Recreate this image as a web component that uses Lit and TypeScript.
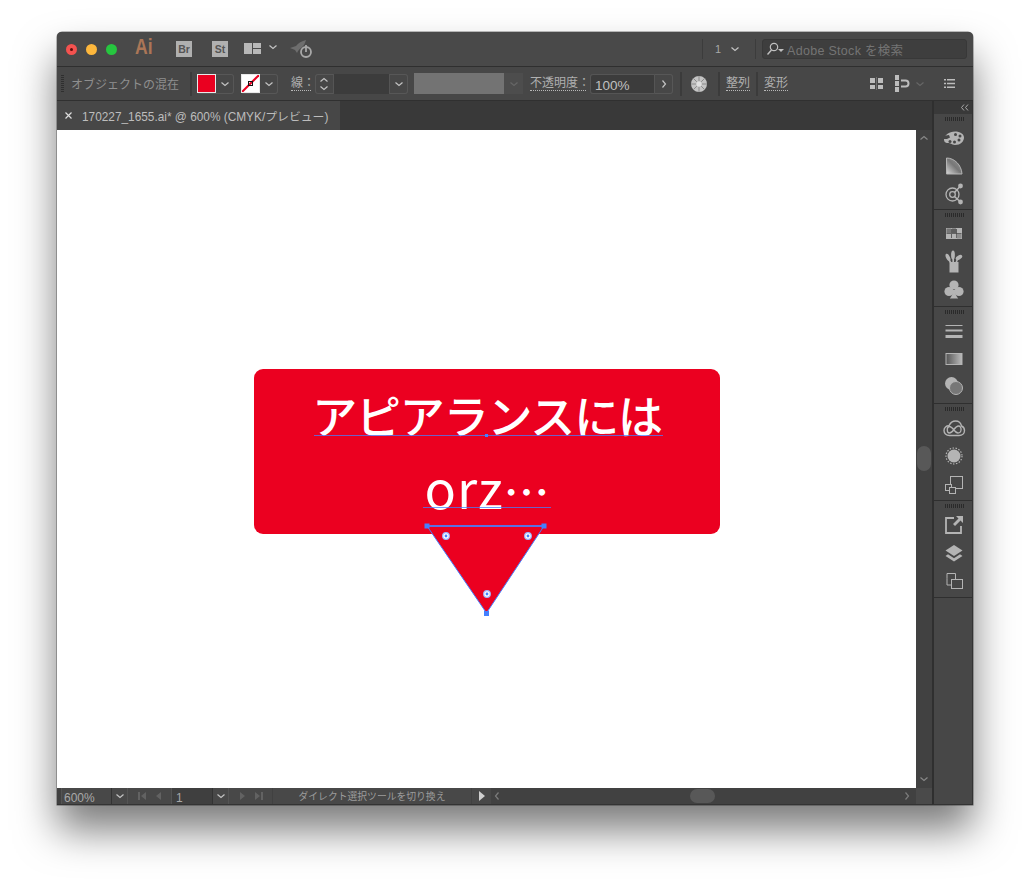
import { LitElement, css, html, svg } from 'lit';
import { customElement } from 'lit/decorators.js';

const chevron = (dir = 'down', color = '#c4c4c4') => {
  const pts: Record<string, string> = {
    down: '1.5,3.5 5,6.5 8.5,3.5',
    up: '1.5,6.5 5,3.5 8.5,6.5',
    right: '3.5,1.5 6.5,5 3.5,8.5',
    left: '6.5,1.5 3.5,5 6.5,8.5',
  };
  return html`<svg class="chev" width="10" height="10" viewBox="0 0 10 10">
    <polyline points=${pts[dir]} fill="none" stroke=${color} stroke-width="1.2" />
  </svg>`;
};

const G = '#b4b4b4';

const dockIcons = [
  [
    svg`<path fill=${G} d="M2 13.500C2 9.500 7 5.500 13 5.500c5 0 9 2.500 9 6 0 4-3.500 7.500-9 7.500-2 0-3-1-4.500-1.500S2 18 2 13.500z"/>
      <path fill="#474747" d="M1 10l6-1 1 2.500-3 1.500-4 0z"/><circle cx="8" cy="15.500" r="1.500" fill="#474747"/><circle cx="12.500" cy="16" r="1.500" fill="#474747"/><circle cx="17" cy="14" r="1.500" fill="#474747"/><circle cx="18" cy="10" r="1.500" fill="#474747"/><circle cx="13.500" cy="8.500" r="1.500" fill="#474747"/>`,
    svg`<defs><linearGradient id="gd" x1="0" y1="1" x2="1" y2="0"><stop offset="0" stop-color="#d8d8d8"/><stop offset=".5" stop-color="#777"/><stop offset="1" stop-color="#999"/></linearGradient></defs>
      <path fill="url(#gd)" stroke=${G} stroke-width="1" d="M4.500 4c8 0 15 7 15.500 16H4.500z"/>`,
    svg`<circle cx="10.500" cy="12.500" r="6.500" fill="none" stroke=${G} stroke-width="1.300"/><circle cx="10.500" cy="12.500" r="2.800" fill="none" stroke=${G} stroke-width="1.300"/><path stroke=${G} stroke-width="1.500" d="M12.500 10.500l6-6.500M12.500 14.500l6 5.500"/><circle cx="18.500" cy="4" r="2.400" fill=${G}/><circle cx="18.500" cy="20" r="2.400" fill=${G}/>`,
  ],
  [
    svg`<rect x="4" y="6" width="16" height="11" fill=${G}/><path fill="#4a4a4a" d="M9 7h.8v4H9zM14 7h.8v9H14zM4.500 11h15v.8h-15zM9 12h.8v4H9z"/><rect x="9.800" y="6.500" width="4.200" height="4.500" fill="#5e5e5e"/><rect x="4.500" y="6.500" width="4.500" height="4.500" fill="#777"/><rect x="14.800" y="12" width="4.700" height="4.500" fill="#8e8e8e"/>`,
    svg`<rect x="7.500" y="12" width="9" height="10.500" fill=${G}/>
      <ellipse cx="6" cy="7.500" rx="1.900" ry="4" transform="rotate(-25 6 7.500)" fill=${G}/><path stroke=${G} stroke-width="1.600" d="M7 10l2 3"/>
      <ellipse cx="11" cy="5" rx="1.900" ry="4.500" fill=${G}/><path stroke=${G} stroke-width="1.600" d="M11.200 9v4"/>
      <ellipse cx="17" cy="7.500" rx="3.600" ry="2" transform="rotate(-30 17 7.500)" fill=${G}/><path stroke=${G} stroke-width="1.600" d="M15.500 9l-1.500 4"/>`,
    svg`<circle cx="12" cy="7" r="4.600" fill=${G}/><circle cx="7" cy="13.500" r="4.600" fill=${G}/><circle cx="17" cy="13.500" r="4.600" fill=${G}/><path fill=${G} d="M10.800 12h2.400c0 4 1 6 3 8.500H7.800c2-2.500 3-4.500 3-8.500z"/>`,
  ],
  [
    svg`<path fill=${G} d="M3.500 6h17v1h-17zM3.500 10.500h17v2h-17zM3.500 16h17v3h-17z"/>`,
    svg`<defs><linearGradient id="gg"><stop offset="0" stop-color="#555"/><stop offset="1" stop-color="#bbb"/></linearGradient></defs><rect x="4" y="6.500" width="16" height="11" fill="url(#gg)" stroke=${G}/>`,
    svg`<circle cx="9.500" cy="8.500" r="6.500" fill=${G}/><circle cx="14" cy="13" r="6.500" fill="#777" stroke=${G} stroke-width="1"/>`,
  ],
  [
    svg`<path fill="none" stroke=${G} stroke-width="1.400" d="M7.500 19.500c-3.500 0-5.500-2.500-5.500-5 0-3 2.500-5 5-4.800C8.500 6.500 11 5 13.500 5c3.500 0 5.500 2.500 6 5 2 .8 3 2.500 3 4.500 0 2.500-2 5-5.500 5z"/><path fill="none" stroke=${G} stroke-width="1.300" d="M7.500 10.500c3.500 0 5 6.500 8.500 6.500 4 0 4-7 .5-7-4 0-5 7-9 7-3 0-3-6.500 0-6.500z"/>`,
    svg`<circle cx="12" cy="12" r="6.500" fill=${G}/><circle cx="12" cy="12" r="8" fill="none" stroke=${G} stroke-width="1.200" stroke-dasharray="1.500 1.500"/>`,
    svg`<rect x="8.500" y="4.500" width="12" height="12" fill="none" stroke=${G} stroke-width="1"/><rect x="3.500" y="12.500" width="6" height="6" fill="#474747" stroke=${G} stroke-width="1"/><rect x="7.500" y="15.500" width="6" height="6" fill="#474747" stroke=${G} stroke-width="1"/>`,
  ],
  [
    svg`<path fill="none" stroke=${G} stroke-width="1.800" d="M12 5H4v15h15v-7"/><path fill=${G} d="M14 3h7v7l-2.500-2.500-5.500 5.500-2-2 5.500-5.500z"/>`,
    svg`<path fill=${G} d="M12 4l8.500 5.500-8.500 5.500-8.500-5.500z"/><path fill=${G} d="M6 13.300l6 3.900 6-3.900 2.500 1.700-8.500 5.500L3.500 15z"/>`,
    svg`<path fill="none" stroke=${G} stroke-width="1" d="M5 9.500V4.500h8.500v6M5 9.500v6.500h4.500"/><rect x="9.500" y="10.500" width="11" height="9" fill="none" stroke=${G}/>`,
  ],
];

@customElement('app-root')
export class AppRoot extends LitElement {
  static styles = css`
    :host {
      display: block;
      height: 885px;
      overflow: hidden;
      background: #fff;
      padding: 32px 0 0 57px;
      box-sizing: border-box;
      font-family: 'Liberation Sans', 'Noto Sans CJK JP', sans-serif;
    }
    .window {
      width: 916px;
      height: 773px;
      display: flex;
      flex-direction: column;
      background: #474747;
      border-radius: 5px 5px 0 0;
      box-shadow: 0 25px 40px 0 rgba(0, 0, 0, 0.52), 0 0 0 0.5px rgba(0, 0, 0, 0.5);
    }
    .chev { display: block; flex: none; }

    .titlebar {
      height: 34px;
      flex: none;
      display: flex;
      align-items: center;
      background: #494949;
      border-bottom: 1px solid #2f2f2f;
      border-radius: 5px 5px 0 0;
    }
    .light { width: 11px; height: 11px; border-radius: 50%; margin-right: 9px; flex: none; }
    .light.close { margin-left: 9px; background: #f4524f; position: relative; }
    .light.close::after {
      content: '';
      position: absolute;
      left: 4px;
      top: 4px;
      width: 3px;
      height: 3px;
      border-radius: 50%;
      background: #5c0d0b;
    }
    .light.min { background: #fdb73c; }
    .light.max { background: #26c63f; margin-right: 0; }
    .ai {
      margin-left: 18px;
      margin-top: -5px;
      width: 20px;
      color: #ab7657;
      font: bold 22px/1 'Liberation Sans', sans-serif;
      transform: scaleX(0.8);
      transform-origin: left;
    }
    .brapp {
      width: 16px;
      height: 16px;
      background: #b0b0b0;
      color: #555;
      font: bold 10.5px/16px 'Liberation Sans', sans-serif;
      text-align: center;
      flex: none;
      margin-top: -1px;
    }
    .br { margin-left: 21px; }
    .st { margin-left: 20px; }
    .workspace { margin-left: 16px; margin-top: -2px; }
    .workspace-chev { margin-left: 7px; margin-top: -5px; }
    .rocket { margin-left: 12px; }
    .right-tools { margin-left: auto; display: flex; align-items: center; }
    .tsep { width: 1px; height: 20px; background: #3c3c3c; flex: none; }
    .page-num { color: #a8a8a8; font-size: 11px; margin-left: 12px; width: 14px; }
    .page-chev { margin-left: 1px; margin-right: 15px; }
    .search {
      margin-left: 6px;
      margin-right: 6px;
      width: 205px;
      height: 20px;
      box-sizing: border-box;
      display: flex;
      align-items: center;
      gap: 1px;
      padding-left: 3px;
      background: #3e3e3e;
      border: 1px solid #383838;
      border-radius: 3px;
      color: #747474;
      font-size: 12.5px;
      letter-spacing: 0.3px;
    }

    .toolbar {
      height: 33px;
      flex: none;
      display: flex;
      align-items: center;
      background: #474747;
      border-bottom: 1px solid #303030;
      color: #b0b0b0;
      font-size: 12px;
      white-space: nowrap;
    }
    .grip {
      margin-left: 4px;
      width: 3px;
      height: 18px;
      flex: none;
      background: repeating-linear-gradient(#2f2f2f 0 1px, transparent 1px 2px);
    }
    .mixed { margin-left: 7px; width: 107px; color: #8f8f8f; }
    .sep { width: 2px; height: 24px; background: #3b3b3b; flex: none; }
    .m12 { margin-left: 12px; }
    .m7 { margin-left: 7px; }
    .m11 { margin-left: 11px; }
    .m6 { margin-left: 6px; }
    .m5 { margin-left: 5px; }
    .ctl {
      height: 20px;
      display: flex;
      align-items: stretch;
      flex: none;
      border-radius: 3px;
      box-shadow: inset 0 0 0 1px #575757;
      background: #474747;
    }
    .swatch { width: 19px; height: 19px; box-sizing: border-box; flex: none; border: 1px solid #e8e8e8; }
    .swatch.fill { background: #ea0020; }
    .swatch.none { background: #fff; }
    .swatch svg { display: block; }
    .drop { width: 18px; display: flex; align-items: center; justify-content: center; flex: none; }
    .dotted { border-bottom: 1px dotted #b8b8b8; line-height: 13px; height: 13px; flex: none; }
    .stroke-label { margin-left: 13px; width: 20px; }
    .spin { width: 18px; display: flex; flex-direction: column; align-items: center; justify-content: center; flex: none; }
    .spin .chev { margin: -1px 0; }
    .input { background: #3c3c3c; border-left: 1px solid #555; border-right: 1px solid #555; }
    .stroke-input { width: 57px; box-sizing: border-box; }
    .stroke-ctl { margin-left: 4px; }
    .gray { margin-left: 6px; width: 90px; height: 21px; background: #737373; flex: none; }
    .gray-drop { width: 19px; height: 21px; display: flex; align-items: center; justify-content: center; background: #4d4d4d; flex: none; }
    .opacity-label { margin-left: 7px; width: 56px; }
    .opacity { margin-left: 4px; }
    .opacity-value {
      width: 65px;
      box-sizing: border-box;
      border: 1px solid #555;
      border-radius: 3px 0 0 3px;
      background: #3c3c3c;
      color: #c0c0c0;
      font-size: 13.5px;
      line-height: 22px;
      padding-left: 4px;
    }
    .globe { margin-left: 9px; flex: none; display: block; }
    .word { width: 24px; }
    .tool-a { margin-left: auto; }
    .tool-b { margin-left: 12px; }
    .tool-c { margin-left: 5px; }
    .tool-d { margin-left: 19px; margin-right: 18px; }

    .tabbar {
      height: 29px;
      flex: none;
      display: flex;
      background: #393939;
    }
    .tab {
      width: 283px;
      display: flex;
      align-items: center;
      background: #474747;
      color: #bdbdbd;
      font-size: 11.85px;
      white-space: nowrap;
    }
    .tab-close { width: 7px; margin-left: 8px; margin-right: 10px; flex: none; display: block; }

    .body { flex: 1; display: flex; min-height: 0; }
    .main { width: 875px; flex: none; display: flex; flex-direction: column; }
    .view { flex: 1; display: flex; min-height: 0; }
    .canvas { width: 859px; flex: none; background: #fff; position: relative; overflow: hidden; }
    .vscroll {
      width: 16px;
      flex: none;
      background: #414141;
      display: flex;
      flex-direction: column;
      align-items: center;
      justify-content: space-between;
      padding: 3px 0 4px;
      box-sizing: border-box;
      position: relative;
    }
    .vthumb { position: absolute; top: 316px; left: 1px; width: 14px; height: 25px; border-radius: 7px; background: #585858; }

    .art {
      position: absolute;
      left: 197px;
      top: 239px;
      width: 466px;
      height: 165px;
      background: #eb0020;
      border-radius: 9px;
      color: #fff;
      font-family: 'Noto Sans CJK JP', sans-serif;
      font-weight: 500;
      font-size: 45px;
      letter-spacing: -1.2px;
      line-height: 72px;
      text-align: center;
      padding-top: 10px;
      box-sizing: border-box;
    }
    .line { display: block; height: 72px; white-space: nowrap; }
    .latin { font-size: 52px; font-weight: 400; letter-spacing: 1px; }
    .dots { font-size: 46px; letter-spacing: 0; }
    .marks { position: absolute; left: 0; top: 0; display: block; }

    .status {
      height: 17px;
      flex: none;
      display: flex;
      align-items: stretch;
      background: #414141;
      color: #a8a8a8;
      font-size: 12px;
      border-bottom: 1px solid #333;
      box-sizing: border-box;
      white-space: nowrap;
    }
    .sfield { background: #484848; box-sizing: border-box; border-left: 1px solid #545454; line-height: 20px; overflow: hidden; flex: none; }
    .zoom { width: 50px; margin-left: 4px; padding-left: 2px; }
    .pagef { width: 41px; padding-left: 4px; background: #3f3f3f; }
    .sdrop { width: 17px; background: #484848; border-left: 1px solid #333; border-right: 1px solid #545454; box-sizing: border-box; display: flex; align-items: center; justify-content: center; flex: none; }
    .nav { width: 43px; display: flex; align-items: center; justify-content: center; gap: 6px; flex: none; background: #484848; }
    .nav svg { display: block; }
    .msg {
      width: 198px;
      flex: none;
      background: #484848;
      margin-left: 1px;
      text-align: center;
      font-size: 9.8px;
      line-height: 18px;
      color: #9c9c9c;
    }
    .playbtn { width: 19px; flex: none; display: flex; align-items: center; justify-content: center; background: #484848; margin-left: 1px; }
    .hscroll { flex: 1; position: relative; display: flex; align-items: center; justify-content: space-between; padding: 0 4px 0 1px; }
    .hthumb { position: absolute; left: 199px; top: 1px; width: 25px; height: 14px; border-radius: 7px; background: #585858; }
    .corner { width: 16px; flex: none; background: #4a4a4a; }

    .dock {
      width: 41px;
      flex: none;
      background: #474747;
      border-left: 2px solid #2f2f2f;
      border-right: 1px solid #333;
      border-bottom: 1px solid #333;
      box-sizing: border-box;
      display: flex;
      flex-direction: column;
      margin-top: -29px;
    }
    .dock-head { height: 13px; flex: none; background: #393939; display: flex; justify-content: flex-end; align-items: center; padding-right: 3px; }
    .dock-arrows { display: block; }
    .group {
      height: 97px;
      box-sizing: border-box;
      flex: none;
      border-bottom: 1.5px solid #2f2f2f;
      display: flex;
      flex-direction: column;
      align-items: center;
      padding: 3px 0 0 2px;
    }
    .group.first { height: 96px; }
    .dock-grip {
      width: 19px;
      height: 4px;
      flex: none;
      margin-bottom: 5px;
      background: repeating-linear-gradient(90deg, #2a2a2a 0 1px, transparent 1px 2px);
    }
    .dock-icon { width: 24px; height: 24px; margin-bottom: 4px; display: block; flex: none; }
  `;

  private _drop() {
    return html`<span class="drop">${chevron()}</span>`;
  }

  private _navIcon(kind: string) {
    const paths: Record<string, string> = {
      first: 'M1 1h2v8H1zM9 1v8L4 5z',
      prev: 'M8 1v8L3 5z',
      next: 'M2 1v8l5-4z',
      last: 'M1 1v8l5-4zM7 1h2v8H7z',
    };
    return html`<svg width="10" height="10" viewBox="0 0 10 10"><path d=${paths[kind]} fill="#626262" /></svg>`;
  }

  private _titlebar() {
    return html`<div class="titlebar">
      <span class="light close"></span><span class="light min"></span><span class="light max"></span>
      <span class="ai">Ai</span>
      <span class="brapp br">Br</span>
      <span class="brapp st">St</span>
      <svg class="workspace" width="17" height="11" viewBox="0 0 17 11">
        <path fill="#b8b8b8" d="M0 0h8v11H0zM9 0h8v5H9zM9 6h8v5H9z" />
      </svg>
      <span class="workspace-chev">${chevron()}</span>
      <svg class="rocket" width="23" height="18" viewBox="0 0 23 18">
        <path fill="#6e6e6e" d="M0 8l6-2c2-3 6-5 10-6-1 3-2 6-5 8-2 1-3 3-4 5L5 10z" />
        <circle cx="16" cy="12" r="5" fill="none" stroke="#a8a8a8" stroke-width="1.8" />
        <path stroke="#a8a8a8" stroke-width="1.8" d="M16 5v7" />
      </svg>
      <div class="right-tools">
        <span class="tsep"></span>
        <span class="page-num">1</span>
        <span class="page-chev">${chevron()}</span>
        <span class="tsep"></span>
        <div class="search">
          <svg width="20" height="14" viewBox="0 0 20 14">
            <circle cx="8" cy="5" r="3.7" fill="none" stroke="#c0c0c0" stroke-width="1.2" />
            <path stroke="#c0c0c0" stroke-width="1.4" d="M5.500 8L1.500 12.500" />
            <path fill="#c0c0c0" d="M12 7h6l-3 3z" />
          </svg>
          <span>Adobe Stock を検索</span>
        </div>
      </div>
    </div>`;
  }

  private _toolbar() {
    return html`<div class="toolbar">
      <span class="grip"></span>
      <span class="mixed">オブジェクトの混在</span>
      <span class="sep m12"></span>
      <span class="ctl m5"><span class="swatch fill"></span>${this._drop()}</span>
      <span class="ctl m7">
        <span class="swatch none">
          <svg width="17" height="17" viewBox="0 0 17 17">
            <path stroke="#ea0020" stroke-width="2" d="M0 17L17 0" />
            <rect x="6.5" y="6.5" width="4" height="4" fill="none" stroke="#111" />
          </svg>
        </span>
        ${this._drop()}
      </span>
      <span class="dotted stroke-label">線：</span>
      <span class="ctl stroke-ctl">
        <span class="spin">${chevron('up')}${chevron('down')}</span>
        <span class="input stroke-input"></span>
        ${this._drop()}
      </span>
      <span class="gray"></span>
      <span class="gray-drop">${chevron('down', '#666')}</span>
      <span class="dotted opacity-label">不透明度：</span>
      <span class="ctl opacity">
        <span class="opacity-value">100%</span>
        <span class="drop">${chevron('right')}</span>
      </span>
      <span class="sep m7"></span>
      <svg class="globe" width="16" height="16" viewBox="0 0 16 16">
        <circle cx="8" cy="8" r="8" fill="#c4c4c4" />
        <g stroke="#8a8a8a" stroke-width="1">
          <path d="M8 0v5M8 11v5M0 8h5M11 8h5M2.300 2.300l3.500 3.500M10.200 10.200l3.500 3.500M13.700 2.300l-3.500 3.500M5.800 10.200l-3.500 3.500" />
        </g>
        <circle cx="8" cy="8" r="2.5" fill="#e0e0e0" />
      </svg>
      <span class="sep m11"></span>
      <span class="dotted word m6">整列</span>
      <span class="sep m6"></span>
      <span class="dotted word m6">変形</span>
      <svg class="tool-a" width="13" height="13" viewBox="0 0 13 13">
        <path fill="#bdbdbd" d="M0 1h5v5H0zM8 1h5v5H8zM0 8h5v4H0zM8 8h5v4H8z" />
        <path fill="#6e6e6e" d="M6 0h1v13H6z" />
      </svg>
      <svg class="tool-b" width="15" height="17" viewBox="0 0 15 17">
        <path fill="#bdbdbd" d="M0 0h4v5H0zM0 6h4v5H0zM0 12h4v5H0z" />
        <path fill="none" stroke="#bdbdbd" stroke-width="2" d="M6 5.500h4.500a3 3 0 0 1 0 6H6" />
      </svg>
      <span class="tool-c">${chevron('down', '#666')}</span>
      <svg class="tool-d" width="11" height="9" viewBox="0 0 11 9">
        <path fill="#bdbdbd" d="M0 0h2v1.500H0zM3 0h8v1.500H3zM0 3.700h2v1.500H0zM3 3.700h8v1.500H3zM0 7.400h2v1.500H0zM3 7.400h8v1.500H3z" />
      </svg>
    </div>`;
  }

  private _artwork() {
    const blue = '#4480ff';
    const sq = (x: number, y: number) => svg`<rect x=${x - 2.5} y=${y - 2.5} width="5" height="5" fill=${blue} />`;
    const dot = (x: number, y: number) =>
      svg`<circle cx=${x} cy=${y} r="3.3" fill="#fff" stroke="#9db8ff" stroke-width="1.2" /><circle cx=${x} cy=${y} r="1.4" fill=${blue} />`;
    return html`<div class="art" lang="ja">
        <span class="line">アピアランスには</span>
        <span class="line"><span class="latin">orz</span><span class="dots">…</span></span>
      </div>
      <svg class="marks" width="859" height="658" viewBox="57 130 859 658">
        <path d="M427 526H544L486.500 613Z" fill="#eb0020" stroke=${blue} stroke-width="1" />
        <path d="M427 526H544" stroke=${blue} stroke-width="1.400" />
        <path d="M314 435.500H663M423 507.500H551" stroke=${blue} stroke-opacity=".75" stroke-width="1" />
        ${sq(427, 526)}${sq(544, 526)}${sq(486.5, 613.5)}
        <rect x="485" y="434" width="3" height="3" fill=${blue} />
        ${dot(446, 536)}${dot(528, 536)}${dot(487, 594)}
      </svg>`;
  }

  private _status() {
    return html`<div class="status">
      <span class="sfield zoom">600%</span>
      <span class="sdrop">${chevron()}</span>
      <span class="nav">${this._navIcon('first')}${this._navIcon('prev')}</span>
      <span class="sfield pagef">1</span>
      <span class="sdrop">${chevron()}</span>
      <span class="nav">${this._navIcon('next')}${this._navIcon('last')}</span>
      <span class="msg">ダイレクト選択ツールを切り換え</span>
      <span class="playbtn">
        <svg width="8" height="10" viewBox="0 0 8 10"><path d="M1 0v10l6-5z" fill="#cfcfcf" /></svg>
      </span>
      <div class="hscroll">
        ${chevron('left', '#7c7c7c')}
        <span class="hthumb"></span>
        ${chevron('right', '#7c7c7c')}
      </div>
      <span class="corner"></span>
    </div>`;
  }

  private _dock() {
    return html`<div class="dock">
      <div class="dock-head">
        <svg class="dock-arrows" width="9" height="7" viewBox="0 0 9 7">
          <path fill="none" stroke="#a8a8a8" d="M4 .5L1.500 3.500 4 6.500M8 .5L5.500 3.500 8 6.500" />
        </svg>
      </div>
      ${dockIcons.map(
        (group, i) => html`<div class="group ${i === 0 ? 'first' : ''}">
          <span class="dock-grip"></span>
          ${group.map((icon) => html`<svg class="dock-icon" viewBox="0 0 24 24">${icon}</svg>`)}
        </div>`,
      )}
    </div>`;
  }

  render() {
    return html`<div class="window">
      ${this._titlebar()} ${this._toolbar()}
      <div class="tabbar">
        <div class="tab">
          <svg class="tab-close" viewBox="0 0 7 7"><path d="M.5.500l6 6M6.500.500l-6 6" stroke="#ddd" stroke-width="1.2" /></svg>
          170227_1655.ai* @ 600% (CMYK/プレビュー)
        </div>
      </div>
      <div class="body">
        <div class="main">
          <div class="view">
            <div class="canvas">${this._artwork()}</div>
            <div class="vscroll">
              ${chevron('up', '#888')}
              <span class="vthumb"></span>
              ${chevron('down', '#888')}
            </div>
          </div>
          ${this._status()}
        </div>
        ${this._dock()}
      </div>
    </div>`;
  }
}
